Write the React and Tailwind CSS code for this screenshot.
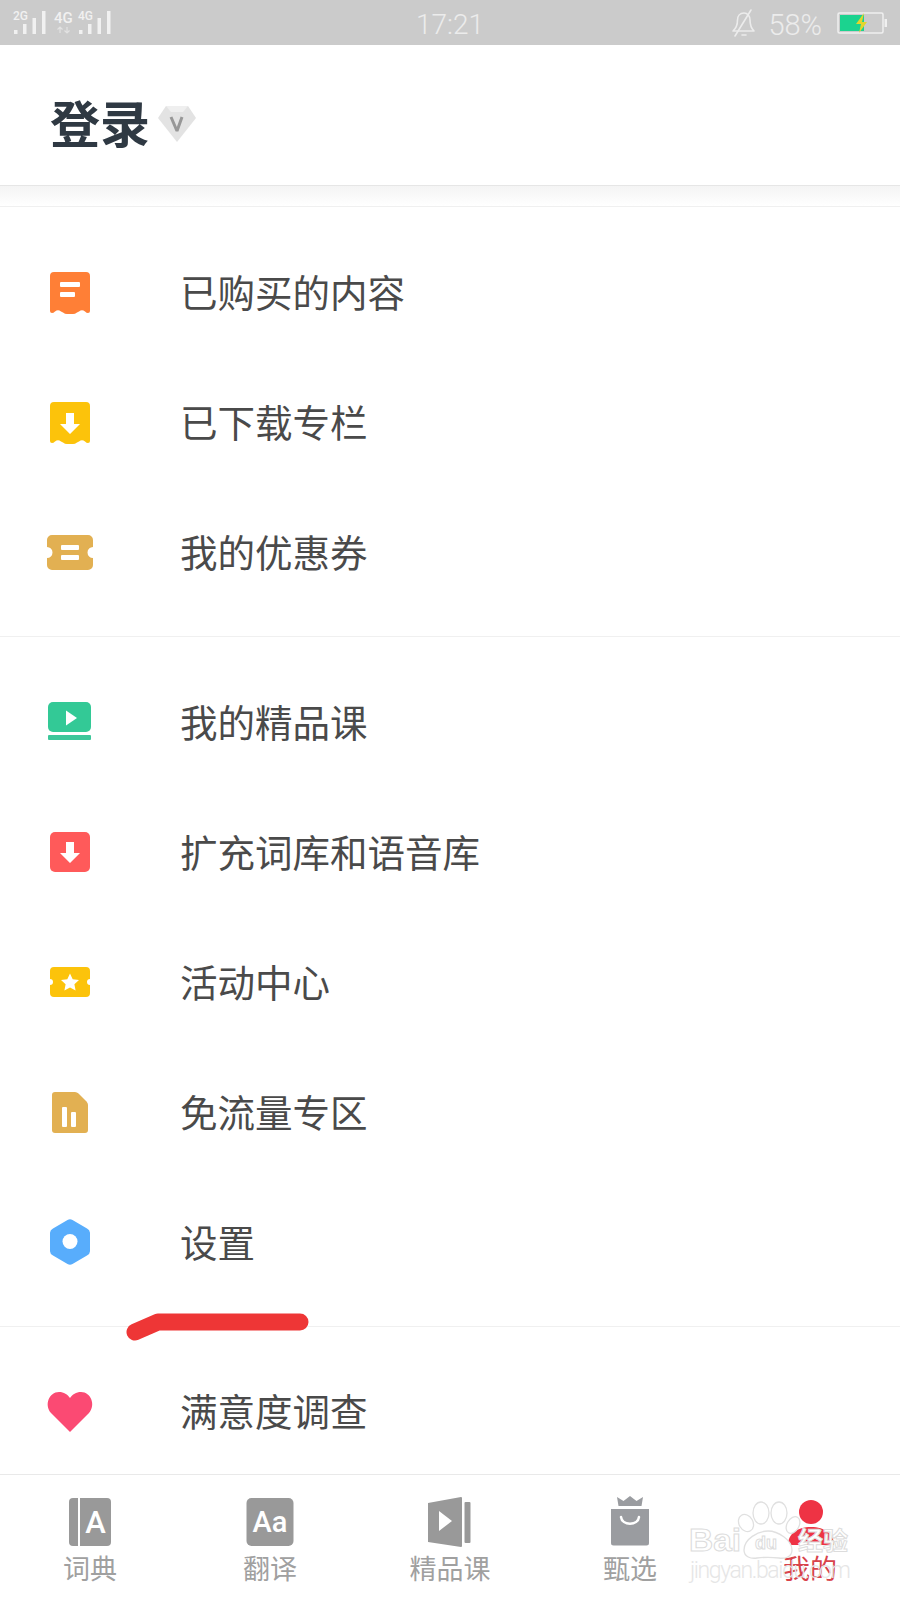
import React from 'react';

const Receipt = ({ fill, children }) => (
  <svg width="60" height="60" viewBox="0 0 60 60">
    <path
      d="M14 9h32a4 4 0 0 1 4 4v35q0 2-2 2q-1.500 0-3-1.500q-3-2.500-6 0l-2 1q-2 1.500-4 1.500h-6q-2 0-4-1.500l-2-1q-3-2.500-6 0q-1.500 1.500-3 1.500q-2 0-2-2V13a4 4 0 0 1 4-4z"
      fill={fill}
    />
    {children}
  </svg>
);

const DownArrow = ({ y }) => (
  <path d={`M26 ${y}h8v11h6l-10 10l-10-10h6z`} fill="#fff" />
);

const icons = {
  bought: (
    <Receipt fill="#ff7f36">
      <rect x="20" y="19" width="20" height="5" rx="1" fill="#fff" />
      <rect x="20" y="29" width="15" height="5" rx="1" fill="#fff" />
    </Receipt>
  ),
  download: (
    <Receipt fill="#fcc30b">
      <DownArrow y="20" />
    </Receipt>
  ),
  coupon: (
    <svg width="60" height="60" viewBox="0 0 60 60">
      <path
        d="M12 12h36a5 5 0 0 1 5 5v7a5.500 5.500 0 0 0 0 11v7a5 5 0 0 1-5 5H12a5 5 0 0 1-5-5v-7a5.500 5.500 0 0 0 0-11v-7a5 5 0 0 1 5-5z"
        fill="#e2b052"
      />
      <rect x="21" y="22" width="18" height="5" rx="1" fill="#fff" />
      <rect x="21" y="32" width="18" height="5" rx="1" fill="#fff" />
    </svg>
  ),
  course: (
    <svg width="60" height="60" viewBox="0 0 60 60">
      <rect x="8" y="9" width="43" height="30" rx="5" fill="#33c996" />
      <rect x="8" y="42" width="43" height="5" rx="1" fill="#3cc79a" />
      <path d="M26 17.500l11 7.500l-11 7.500z" fill="#fff" />
    </svg>
  ),
  lexicon: (
    <svg width="60" height="60" viewBox="0 0 60 60">
      <rect x="10" y="9" width="40" height="40" rx="5" fill="#ff5a5a" />
      <DownArrow y="19" />
    </svg>
  ),
  activity: (
    <svg width="60" height="60" viewBox="0 0 60 60">
      <path
        d="M14 14h32a4 4 0 0 1 4 4v8a3 3 0 0 0 0 6v8a4 4 0 0 1-4 4H14a4 4 0 0 1-4-4v-8a3 3 0 0 0 0-6v-8a4 4 0 0 1 4-4z"
        fill="#fcc30b"
      />
      <path
        d="M30 20.500l2.700 5.700l6.300.8l-4.600 4.300l1.200 6.200l-5.600-3.100l-5.600 3.100l1.200-6.200l-4.600-4.300l6.300-.8z"
        fill="#fff"
      />
    </svg>
  ),
  free: (
    <svg width="60" height="60" viewBox="0 0 60 60">
      <path
        d="M15 9h20q2 0 3.500 1.500l8 8q1.500 1.500 1.500 3.500v25a3 3 0 0 1-3 3H15a3 3 0 0 1-3-3V12a3 3 0 0 1 3-3z"
        fill="#e2b052"
      />
      <rect x="22" y="24" width="5" height="20" rx="1" fill="#fff" />
      <rect x="31" y="29" width="5" height="15" rx="1" fill="#fff" />
    </svg>
  ),
  settings: (
    <svg width="60" height="60" viewBox="0 0 60 60">
      <path
        d="M27.500 7a5 5 0 0 1 5 0l14.500 8.400a5 5 0 0 1 3 4.300v18.600a5 5 0 0 1-3 4.300L32.500 51a5 5 0 0 1-5 0L13 42.600a5 5 0 0 1-3-4.300V19.700a5 5 0 0 1 3-4.300z"
        fill="#58adfc"
      />
      <circle cx="30" cy="28.500" r="7.500" fill="#fff" />
    </svg>
  ),
  survey: (
    <svg width="60" height="60" viewBox="0 0 60 60">
      <path
        d="M30 50L11 31C4 23 9 10 19 10c5 0 8.500 2.500 11 6c2.500-3.500 6-6 11-6c10 0 15 13 8 21z"
        fill="#fb4a73"
      />
    </svg>
  ),
};

const Row = ({ icon, label }) => (
  <div className="flex items-center h-[130px] pl-[40px]">
    <div className="w-[60px] h-[60px] mr-[80px] shrink-0">{icons[icon]}</div>
    <span className="text-[37.5px] leading-[44px] pb-[4px] text-[#4a4a4a]">{label}</span>
  </div>
);

const Signal = ({ x }) => (
  <g fill="#f1f1f1">
    <rect x={x} y="30" width="3.500" height="4" />
    <rect x={x + 9} y="24" width="3.500" height="10" />
    <rect x={x + 18.500} y="18" width="3.500" height="16" />
    <rect x={x + 28} y="11" width="3.500" height="23" />
  </g>
);

const StatusBar = () => (
  <div className="flex items-center h-[45px] bg-[#cbcbcb] text-[#ececec] font-['Roboto',sans-serif] shrink-0">
    <div className="w-[300px] shrink-0">
      <svg width="120" height="45" viewBox="0 0 120 45">
        <text x="13" y="20" fontSize="12" fontWeight="500" fill="#f1f1f1" fontFamily="Roboto, sans-serif">2G</text>
        <Signal x={14} />
        <text x="54" y="23" fontSize="15" fontWeight="500" fill="#f1f1f1" fontFamily="Roboto, sans-serif">4G</text>
        <path d="M60 33v-6m-2.500 2.500l2.500-2.500l2.500 2.500M67 27v6m-2.500-2.500l2.500 2.500l2.500-2.500" stroke="#e2e2e2" strokeWidth="1.200" fill="none" />
        <text x="78" y="20" fontSize="12" fontWeight="500" fill="#f1f1f1" fontFamily="Roboto, sans-serif">4G</text>
        <Signal x={79} />
      </svg>
    </div>
    <div className="flex-1 text-center">
      <span className="text-[28px] font-light leading-none relative top-[3px]">17:21</span>
    </div>
    <div className="w-[300px] shrink-0 flex items-center justify-end pr-[13px]">
      <svg width="28" height="30" viewBox="0 0 28 30" fill="none" stroke="#ececec" strokeWidth="1.600" strokeLinejoin="round" strokeLinecap="round" className="mr-[10px]">
        <path d="M14 5c-4 0-6.500 3-6.500 7c0 5-1 8-4.500 11h21c-3-3-4-6-4-11c0-4-2.500-7-6-7z" />
        <path d="M21 2L5 28M12 27h4" />
      </svg>
      <span className="text-[29px] font-light leading-none mr-[15px] relative top-[3px]">58%</span>
      <svg width="50" height="22" viewBox="0 0 50 22">
        <rect x="1" y="1" width="45" height="20" rx="1.500" fill="none" stroke="#f0f0f0" strokeWidth="1.500" />
        <rect x="3" y="3" width="24" height="16" fill="#1bd38f" />
        <rect x="47.500" y="7" width="2.500" height="8" fill="#f0f0f0" />
        <path d="M27 1l-8 11h5l-2 9l8-11h-5z" fill="#e3d52b" />
      </svg>
    </div>
  </div>
);

const Diamond = () => (
  <svg width="40" height="38" viewBox="0 0 40 38">
    <path d="M9 1h22l8 12l-19 24L1 13z" fill="#e3e3e3" />
    <path d="M9 1h22l-5 6H14z" fill="#efefef" />
    <path d="M14 12l6 14l5-14" fill="none" stroke="#979797" strokeWidth="3" strokeLinejoin="bevel" />
  </svg>
);

const navIcons = [
  <svg key="dict" width="60" height="52" viewBox="0 0 60 52">
    <path d="M13 2h5v48h-5a4 4 0 0 1-4-4V6a4 4 0 0 1 4-4z" fill="#999" />
    <path d="M20 2h27a4 4 0 0 1 4 4v40a4 4 0 0 1-4 4H20z" fill="#999" />
    <text x="35.500" y="37" textAnchor="middle" fontSize="31" fontWeight="500" fill="#fff" fontFamily="Roboto, sans-serif">A</text>
  </svg>,
  <svg key="trans" width="60" height="52" viewBox="0 0 60 52">
    <rect x="6.500" y="2" width="47" height="48" rx="5" fill="#999" />
    <text x="30" y="36" textAnchor="middle" fontSize="29" fontWeight="500" fill="#fff" fontFamily="Roboto, sans-serif">Aa</text>
  </svg>,
  <svg key="course" width="60" height="52" viewBox="0 0 60 52">
    <path d="M8 7l33-6a1 1 0 0 1 1 1v48a1 1 0 0 1-1 1L8 46z" fill="#999" />
    <rect x="44.500" y="6" width="6" height="41" rx="1" fill="#999" />
    <path d="M19 15l13 10l-13 10z" fill="#fff" />
  </svg>,
  <svg key="shop" width="60" height="52" viewBox="0 0 60 52">
    <path d="M17 1l6.500 4l6.500-5l6.500 5l6.500-4l-1.500 9H18.500z" fill="#9a9ca0" />
    <path d="M11 13h38v34a2.500 2.500 0 0 1-2.500 2.500h-33a2.500 2.500 0 0 1-2.500-2.500z" fill="#9a9ca0" />
    <path d="M21 21c1 9 17 9 18 0" fill="none" stroke="#fff" strokeWidth="2.500" strokeLinecap="round" />
  </svg>,
  <svg key="me" width="60" height="52" viewBox="0 0 60 52">
    <circle cx="31" cy="16" r="12" fill="#ee3344" />
    <path d="M8 49c0-11 9-18 23-18s23 7 23 18z" fill="#ee3344" />
  </svg>,
];

const navItems = [
  { label: '词典' },
  { label: '翻译' },
  { label: '精品课' },
  { label: '甄选' },
  { label: '我的', active: true },
];

const App = () => {
  return (
    <div className="relative w-[900px] h-[1600px] flex flex-col bg-white overflow-hidden font-['Noto_Sans_CJK_SC','Noto_Sans',sans-serif]">
      <StatusBar />

      <div className="flex items-start h-[140px] pt-[51px] pl-[50px] shrink-0">
        <h1 className="text-[50px] leading-[50px] font-bold text-[#2f3943]">登录</h1>
        <div className="ml-[7px] mt-[9px]">
          <Diamond />
        </div>
      </div>
      <div className="h-[21px] shrink-0 border-t border-[#e6e6e6] bg-gradient-to-b from-[#f4f4f4] to-white" />

      <div className="flex-1 min-h-0 overflow-hidden">
        <div className="border-t border-[#f0f0f0] pt-[21px] pb-[18px]">
          <Row icon="bought" label="已购买的内容" />
          <Row icon="download" label="已下载专栏" />
          <Row icon="coupon" label="我的优惠券" />
        </div>
        <div className="border-t border-[#f0f0f0] pt-[21px] pb-[18px]">
          <Row icon="course" label="我的精品课" />
          <Row icon="lexicon" label="扩充词库和语音库" />
          <Row icon="activity" label="活动中心" />
          <Row icon="free" label="免流量专区" />
          <Row icon="settings" label="设置" />
        </div>
        <div className="border-t border-[#f0f0f0] pt-[20px]">
          <Row icon="survey" label="满意度调查" />
        </div>
      </div>

      <div className="grid grid-cols-5 h-[126px] shrink-0 pt-[21px] bg-white border-t border-[#e9e9e9]">
        {navItems.map((item, i) => (
          <div key={item.label} className="flex flex-col items-center">
            {navIcons[i]}
            <span className={`mt-[5px] text-[27px] leading-[30px] ${item.active ? 'text-[#d8434b]' : 'text-[#a0a0a0]'}`}>
              {item.label}
            </span>
          </div>
        ))}
      </div>

      {/* red marker stroke drawn over the settings row */}
      <svg className="absolute left-[120px] top-[1305px]" width="195" height="45" viewBox="0 0 195 45">
        <path d="M15 27L38 17H180" fill="none" stroke="#ee3636" strokeWidth="17" strokeLinecap="round" strokeLinejoin="round" />
      </svg>

      {/* baidu jingyan watermark */}
      <svg className="absolute left-[680px] top-[1495px]" width="190" height="95" viewBox="0 0 190 95">
        <g fill="none" stroke="#e0e0e0" strokeWidth="1.300">
          <ellipse cx="81" cy="18" rx="8" ry="11" />
          <ellipse cx="99" cy="18" rx="8" ry="11" />
          <ellipse cx="66" cy="28" rx="7" ry="9" transform="rotate(-30 66 28)" />
          <ellipse cx="113" cy="30" rx="6" ry="9" transform="rotate(30 113 30)" />
          <path d="M88 36c-10 0-24 8-24 19c0 7 7 9 13 8c8-1 14-1 22 0c6 1 13-1 13-8c0-10-14-19-24-19z" fill="#fff" />
        </g>
        <g fontFamily="Liberation Sans, sans-serif" fontWeight="700" fill="#fff" stroke="#dcdcdc" strokeWidth="1">
          <text x="9" y="56" fontSize="31" textLength="52" lengthAdjust="spacingAndGlyphs">Bai</text>
          <text x="75" y="54" fontSize="18">du</text>
          <text x="118" y="55" fontSize="25" fontFamily="Noto Sans CJK SC, sans-serif">经验</text>
        </g>
        <text x="10" y="83" fontSize="23" fill="#e6e6e6" fontFamily="Roboto, sans-serif" fontWeight="300" textLength="161">jingyan.baidu.com</text>
      </svg>
    </div>
  );
};

export default App;
